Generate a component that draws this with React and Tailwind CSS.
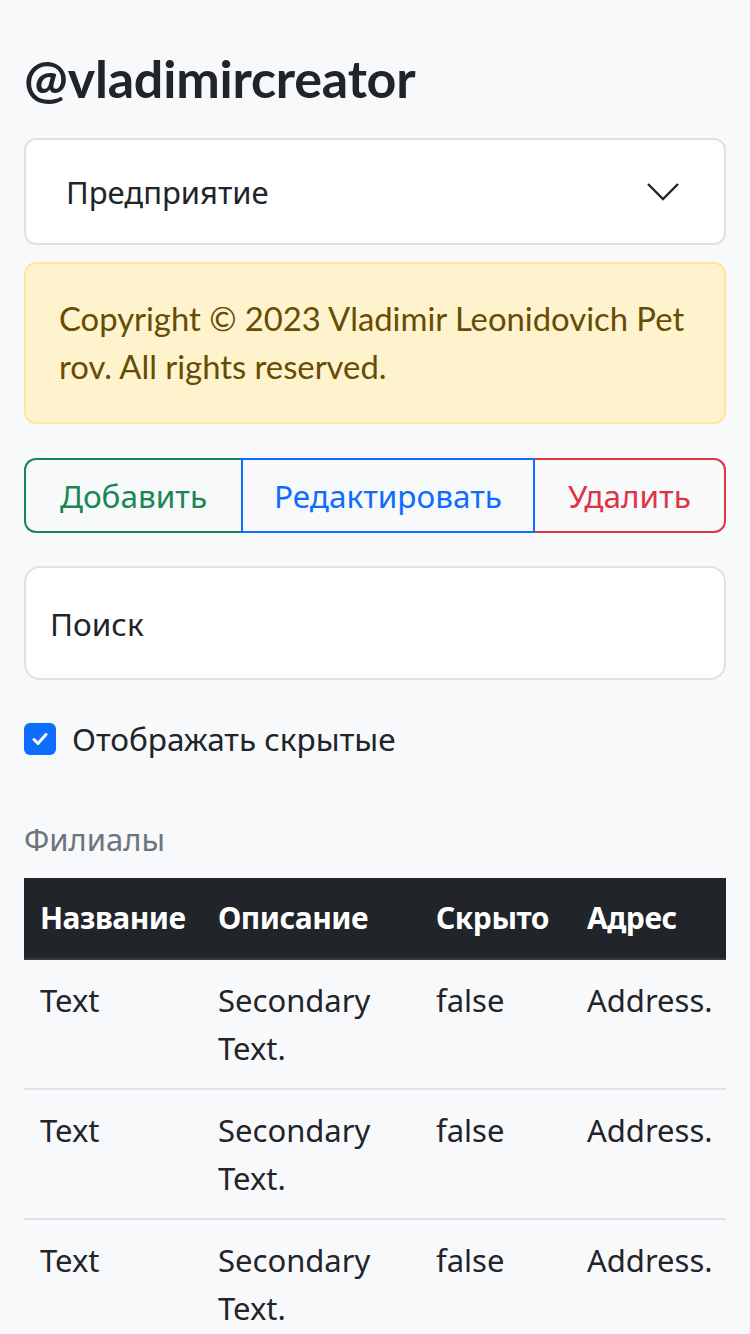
import { useState } from "react";

const rows = [
  { name: "Text", description: "Secondary Text.", hidden: "false", address: "Address." },
  { name: "Text", description: "Secondary Text.", hidden: "false", address: "Address." },
  { name: "Text", description: "Secondary Text.", hidden: "false", address: "Address." },
];

function App() {
  const [showHidden, setShowHidden] = useState(true);

  return (
    <div className="min-h-screen bg-[#f8f9fa] px-6 pt-[47px] font-['Noto_Sans',sans-serif] text-[#212529]">
      <h2 className="font-['Lato',sans-serif] text-[52px] font-bold leading-[1.2] tracking-[-0.2px]">
        @vladimircreator
      </h2>

      <div className="mt-[29px] flex h-[107px] items-center justify-between rounded-[12px] border-2 border-[#dee2e6] bg-white pl-[40px] pr-[44px]">
        <span className="text-[31px]">Предприятие</span>
        <svg width="34" height="20" viewBox="0 0 34 20" fill="none">
          <path d="M2 2L17 17L32 2" stroke="#212529" strokeWidth="2.4" />
        </svg>
      </div>

      <div className="mt-[17px] rounded-[12px] border-2 border-[#ffe69c] bg-[#fff3cd] px-[33px] py-[31px] font-['Lato',sans-serif] text-[32.8px] leading-[48px] text-[#664d03] break-all">
        Copyright © 2023 Vladimir Leonidovich Petrov. All rights reserved.
      </div>

      <div className="mt-[34px] flex h-[75px] text-[31.5px]">
        <button className="w-[217px] rounded-l-[12px] border-2 border-r-0 border-[#198754] text-[#198754]">
          Добавить
        </button>
        <button className="w-[294px] border-2 border-[#0d6efd] text-[#0d6efd]">
          Редактировать
        </button>
        <button className="flex-1 rounded-r-[12px] border-2 border-l-0 border-[#dc3545] text-[#dc3545]">
          Удалить
        </button>
      </div>

      <div className="mt-[33px] flex h-[114px] items-center rounded-[16px] border-2 border-[#dee2e6] bg-white px-[24px]">
        <span className="text-[31.5px] text-[#212529]">Поиск</span>
      </div>

      <label className="mt-[35px] flex items-center gap-[16px]">
        <button
          onClick={() => setShowHidden(!showHidden)}
          className={`flex h-8 w-8 items-center justify-center rounded-[6px] ${
            showHidden ? "bg-[#0d6efd]" : "border-2 border-[#dee2e6] bg-white"
          }`}
        >
          {showHidden && (
            <svg width="18" height="16" viewBox="0 0 18 16" fill="none">
              <path d="M3 8.5L7 12.5L15 3.5" stroke="white" strokeWidth="3" strokeLinecap="round" strokeLinejoin="round" />
            </svg>
          )}
        </button>
        <span className="text-[31.5px]">Отображать скрытые</span>
      </label>

      <div className="mt-[53px] text-[31px] text-[#6c757d]">Филиалы</div>

      <table className="mt-[16px] w-full table-fixed border-collapse text-left text-[31px]">
        <thead className="bg-[#212529] text-[30px] text-white">
          <tr className="border-b-2 border-[#373b3e]">
            <th className="w-[178px] px-4 py-4 font-bold leading-[48px] tracking-[-0.5px]">Название</th>
            <th className="w-[218px] px-4 py-4 font-bold leading-[48px] tracking-[-0.5px]">Описание</th>
            <th className="w-[151px] px-4 py-4 font-bold leading-[48px] tracking-[-0.5px]">Скрыто</th>
            <th className="px-4 py-4 font-bold leading-[48px] tracking-[-0.5px]">Адрес</th>
          </tr>
        </thead>
        <tbody>
          {rows.map((row, i) => (
            <tr key={i} className="border-b-2 border-[#dee2e6] align-top">
              <td className="px-4 py-4 leading-[48px]">{row.name}</td>
              <td className="px-4 py-4 leading-[48px]">{row.description}</td>
              <td className="px-4 py-4 leading-[48px]">{row.hidden}</td>
              <td className="px-4 py-4 leading-[48px]">{row.address}</td>
            </tr>
          ))}
        </tbody>
      </table>
    </div>
  );
}

export default App;
